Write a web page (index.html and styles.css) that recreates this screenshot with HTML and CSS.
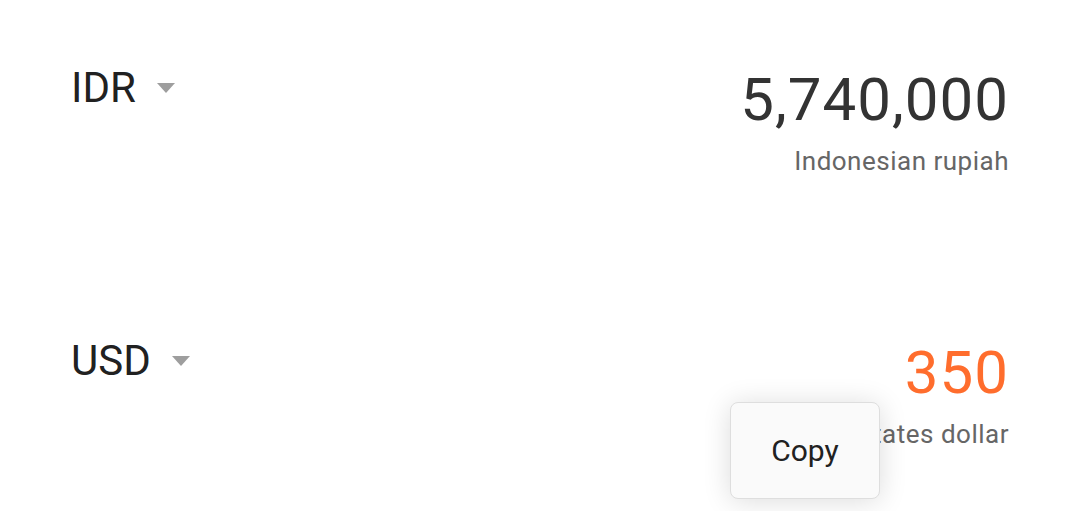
FILE: index.html
```html
<!DOCTYPE html>
<html lang="en">
<head>
<meta charset="utf-8">
<title>Currency converter</title>
<link rel="stylesheet" href="styles.css">
</head>
<body>
<main class="converter">
  <section class="row">
    <div class="currency">
      <span class="code">IDR</span>
      <span class="caret"></span>
    </div>
    <div class="amount">
      <div class="value">5,740,000</div>
      <div class="name">Indonesian rupiah</div>
    </div>
  </section>
  <section class="row row-second">
    <div class="currency">
      <span class="code">USD</span>
      <span class="caret"></span>
    </div>
    <div class="amount">
      <div class="value value-active">350</div>
      <div class="name">United States dollar</div>
    </div>
  </section>
  <div class="popup">Copy</div>
</main>
</body>
</html>
```

FILE: styles.css
```css
html, body {
  margin: 0;
  padding: 0;
  background: #ffffff;
}

body {
  font-family: Roboto, "Noto Sans", sans-serif;
  width: 1079px;
  height: 511px;
  overflow: hidden;
}

.converter {
  position: relative;
  padding: 67px 70px 0 71px;
  display: flex;
  flex-direction: column;
  gap: 166px;
}

.row {
  display: flex;
  justify-content: space-between;
  align-items: flex-start;
}

.currency {
  display: flex;
  align-items: center;
  gap: 21px;
  height: 42px;
}

.code {
  font-size: 42px;
  line-height: 42px;
  color: #212121;
}

.caret {
  width: 0;
  height: 0;
  border-left: 9.5px solid transparent;
  border-right: 9.5px solid transparent;
  border-top: 10px solid #9e9e9e;
}

.amount {
  display: flex;
  flex-direction: column;
  align-items: flex-end;
  padding-top: 3px;
}

.value {
  font-size: 60px;
  line-height: 60px;
  letter-spacing: 1px;
  color: #333333;
}

.value-active {
  color: #ff6d2d;
}

.name {
  margin-top: 18px;
  font-size: 26px;
  line-height: 26px;
  letter-spacing: 0.5px;
  color: #666666;
}

.popup {
  position: absolute;
  left: 730px;
  top: 402px;
  width: 150px;
  height: 97px;
  box-sizing: border-box;
  background: #fafafa;
  border: 1px solid #dedede;
  border-radius: 8px;
  box-shadow: 0 2px 28px rgba(0, 0, 0, 0.14);
  display: flex;
  align-items: center;
  justify-content: center;
  font-size: 30px;
  color: #212121;
}
```
